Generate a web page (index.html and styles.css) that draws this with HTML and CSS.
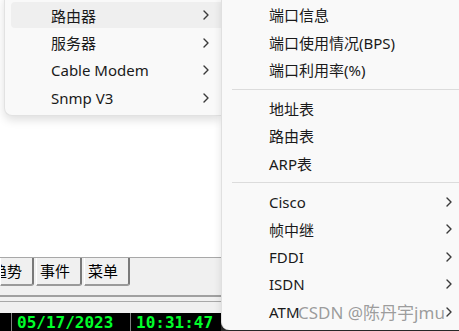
FILE: index.html
```html
<!DOCTYPE html>
<html lang="zh">
<head>
<meta charset="utf-8">
<link rel="stylesheet" href="styles.css">
</head>
<body>
<div class="screen">
  <div class="app">
    <div class="canvas"></div>
    <div class="panel">
      <div class="tabs">
        <div class="tab tab-first">趋势</div>
        <div class="tab">事件</div>
        <div class="tab">菜单</div>
      </div>
      <div class="rule rule-a"></div>
      <div class="rule rule-b"></div>
    </div>
    <div class="statusbar">
      <div class="cell cell-pad"></div>
      <div class="cell cell-date">05/17/2023</div>
      <div class="cell cell-time">10:31:47</div>
    </div>
    <div class="menu">
      <div class="item active"><span>路由器</span><svg class="chev" width="6" height="10" viewBox="0 0 6 10"><path d="M1 1 L5 5 L1 9"/></svg></div>
      <div class="item"><span>服务器</span><svg class="chev" width="6" height="10" viewBox="0 0 6 10"><path d="M1 1 L5 5 L1 9"/></svg></div>
      <div class="item"><span>Cable Modem</span><svg class="chev" width="6" height="10" viewBox="0 0 6 10"><path d="M1 1 L5 5 L1 9"/></svg></div>
      <div class="item"><span>Snmp V3</span><svg class="chev" width="6" height="10" viewBox="0 0 6 10"><path d="M1 1 L5 5 L1 9"/></svg></div>
    </div>
  </div>
  <div class="submenu">
    <div class="sitem"><span>端口信息</span></div>
    <div class="sitem"><span>端口使用情况(BPS)</span></div>
    <div class="sitem"><span>端口利用率(%)</span></div>
    <div class="sep"></div>
    <div class="sitem"><span>地址表</span></div>
    <div class="sitem"><span>路由表</span></div>
    <div class="sitem"><span>ARP表</span></div>
    <div class="sep"></div>
    <div class="sitem"><span>Cisco</span><svg class="chev" width="6" height="10" viewBox="0 0 6 10"><path d="M1 1 L5 5 L1 9"/></svg></div>
    <div class="sitem"><span>帧中继</span><svg class="chev" width="6" height="10" viewBox="0 0 6 10"><path d="M1 1 L5 5 L1 9"/></svg></div>
    <div class="sitem"><span>FDDI</span><svg class="chev" width="6" height="10" viewBox="0 0 6 10"><path d="M1 1 L5 5 L1 9"/></svg></div>
    <div class="sitem"><span>ISDN</span><svg class="chev" width="6" height="10" viewBox="0 0 6 10"><path d="M1 1 L5 5 L1 9"/></svg></div>
    <div class="sitem"><span>ATM</span><svg class="chev" width="6" height="10" viewBox="0 0 6 10"><path d="M1 1 L5 5 L1 9"/></svg></div>
  </div>
  <div class="watermark">CSDN @陈丹宇jmu</div>
</div>
</body>
</html>
```

FILE: styles.css
```css
html, body {
  margin: 0;
  padding: 0;
  background: #ffffff;
}
.screen {
  position: relative;
  width: 459px;
  height: 331px;
  overflow: hidden;
  display: grid;
  grid-template-columns: 221px 238px;
  background: #2a2a2a;
  font-family: "Noto Sans", "Noto Sans CJK SC", sans-serif;
}
.app {
  position: relative;
  display: flex;
  flex-direction: column;
  height: 331px;
}
.canvas {
  height: 257px;
  background: #ffffff;
}
.panel {
  height: 56px;
  background: #f0f0f0;
  border-top: 1px solid #a8a8a8;
  box-sizing: border-box;
  display: flex;
  flex-direction: column;
}
.tabs {
  display: flex;
  height: 28px;
  gap: 2px;
}
.tab {
  width: 46px;
  height: 28px;
  box-sizing: border-box;
  background: #f0f0f0;
  border-left: 1px solid #ffffff;
  border-right: 2px solid #7a7a7a;
  border-bottom: 2px solid #9a9a9a;
  border-bottom-right-radius: 3px;
  font-family: "Noto Sans CJK SC", sans-serif;
  font-size: 15px;
  color: #000;
  line-height: 26px;
  padding-left: 3px;
}
.tab-first {
  width: 34px;
  padding-left: 0;
  text-indent: -9px;
  overflow: hidden;
  white-space: nowrap;
}
.rule {
  height: 2px;
}
.rule-a {
  margin-top: 9px;
  background: #a0a0a0;
}
.rule-b {
  margin-top: 4px;
  height: 1px;
  background: #a8a8a8;
}
.statusbar {
  height: 18px;
  background: #000;
  display: flex;
}
.cell {
  height: 18px;
  box-sizing: border-box;
  font-family: "DejaVu Sans Mono", monospace;
  font-weight: bold;
  font-size: 16px;
  line-height: 19px;
  color: #00ff2a;
}
.cell-pad {
  width: 12px;
  border-right: 1px solid #808080;
}
.cell-date {
  width: 119px;
  padding-left: 5px;
  border-right: 1px solid #808080;
}
.cell-time {
  padding-left: 5px;
}
.menu {
  position: absolute;
  left: 4px;
  top: -8px;
  width: 217px;
  box-sizing: border-box;
  padding: 9px 0 4px 6px;
  background: #f9f9f9;
  border: 1px solid #e2e2e2;
  border-right: none;
  border-radius: 8px 0 0 8px;
  box-shadow: 0 4px 10px rgba(0, 0, 0, 0.13);
  z-index: 1;
}
.item {
  height: 26px;
  margin-bottom: 1.5px;
  display: flex;
  align-items: center;
  justify-content: space-between;
  padding: 0 12px 0 40px;
  border-radius: 4px 0 0 4px;
  font-size: 15px;
  color: #1a1a1a;
}
.item:last-child {
  margin-bottom: 0;
}
.item.active {
  background: #efefef;
}
.chev {
  fill: none;
  stroke: #3a3a3a;
  stroke-width: 1.4;
  stroke-linecap: round;
  stroke-linejoin: round;
}
.submenu {
  position: relative;
  z-index: 2;
  height: 330px;
  box-sizing: border-box;
  padding-top: 1px;
  background: #f9f9f9;
  border-left: 1px solid #e0e0e0;
  border-bottom-left-radius: 8px;
  box-shadow: -2px 0 6px rgba(0, 0, 0, 0.07);
}
.sitem {
  height: 27.5px;
  display: flex;
  align-items: center;
  justify-content: space-between;
  padding: 0 7px 0 47px;
  font-size: 15px;
  color: #1a1a1a;
}
.sep {
  height: 1px;
  margin: 5px 0 5px 10px;
  background: #dcdcdc;
}
.watermark {
  position: absolute;
  left: 298px;
  top: 299px;
  z-index: 3;
  font-family: "Noto Sans", "Noto Sans CJK SC", sans-serif;
  font-size: 17px;
  color: rgba(110, 110, 110, 0.68);
  white-space: nowrap;
}
```
